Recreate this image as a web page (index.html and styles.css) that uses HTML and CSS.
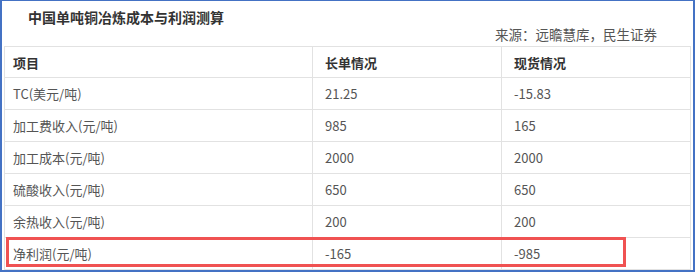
FILE: index.html
```html
<!DOCTYPE html>
<html lang="zh">
<head>
<meta charset="utf-8">
<link rel="stylesheet" href="styles.css">
</head>
<body>
<div class="frame">
  <div class="title">中国单吨铜冶炼成本与利润测算</div>
  <div class="source">来源：远瞻慧库，民生证券</div>
  <table class="data">
    <colgroup><col class="c1"><col class="c2"><col class="c3"></colgroup>
    <thead>
      <tr><th>项目</th><th>长单情况</th><th>现货情况</th></tr>
    </thead>
    <tbody>
      <tr><td>TC(美元/吨)</td><td>21.25</td><td>-15.83</td></tr>
      <tr><td>加工费收入(元/吨)</td><td>985</td><td>165</td></tr>
      <tr><td>加工成本(元/吨)</td><td>2000</td><td>2000</td></tr>
      <tr><td>硫酸收入(元/吨)</td><td>650</td><td>650</td></tr>
      <tr><td>余热收入(元/吨)</td><td>200</td><td>200</td></tr>
      <tr><td>净利润(元/吨)</td><td>-165</td><td>-985</td></tr>
    </tbody>
  </table>
  <div class="highlight"></div>
</div>
</body>
</html>
```

FILE: styles.css
```css
html, body {
  margin: 0;
  padding: 0;
  background: #ffffff;
}
.frame {
  position: relative;
  width: 695px;
  height: 272px;
  box-sizing: border-box;
  border: 2px solid #4472c4;
  border-top-width: 1px;
  font-family: "Noto Sans CJK SC", "Noto Sans", sans-serif;
  color: #555555;
  padding: 0 3px 0 2px;
}
.title {
  font-size: 14px;
  font-weight: bold;
  color: #333333;
  line-height: 18px;
  padding: 7px 0 0 24px;
  height: 18px;
}
.source {
  font-size: 13.5px;
  line-height: 16px;
  height: 16px;
  text-align: right;
  padding-right: 33px;
  color: #555555;
}
.data {
  border-collapse: collapse;
  width: 687px;
  table-layout: fixed;
  font-size: 13px;
  margin-top: 4px;
}
.c1 { width: 308px; }
.c2 { width: 189px; }
.c3 { width: 189px; }
.data th, .data td {
  border: 1px solid #e2e2e2;
  height: 32px;
  padding: 0 0 0 12px;
  text-align: left;
  vertical-align: middle;
  box-sizing: border-box;
}
.data th {
  font-weight: bold;
  color: #333333;
  height: 31px;
}
.data tr > :first-child {
  padding-left: 8px;
}
.highlight {
  position: absolute;
  left: 4px;
  top: 236px;
  width: 620px;
  height: 30px;
  box-sizing: border-box;
  border: 3px solid #f05252;
}
```
